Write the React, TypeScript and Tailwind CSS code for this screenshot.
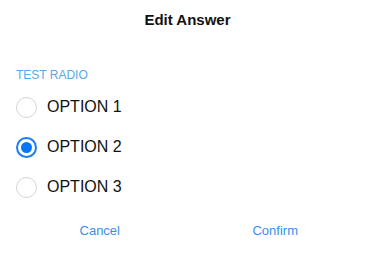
import React, { useState } from "react";

const options = ["OPTION 1", "OPTION 2", "OPTION 3"];

export default function App() {
  const [sel, setSel] = useState(1);
  return (
    <div
      className="w-[375px] h-[254px] bg-white flex flex-col"
      style={{ fontFamily: '"Liberation Sans", Arial, sans-serif' }}
    >
      <div className="h-[40px] flex items-center justify-center text-[15px] font-bold text-[#111]">
        Edit Answer
      </div>
      <div className="pt-[28px] px-[16px] text-[12px] leading-[14px] text-[#5aa9e6]">
        TEST RADIO
      </div>
      <div className="flex flex-col px-[16px] pt-[5px]">
        {options.map((o, i) => (
          <button
            key={o}
            onClick={() => setSel(i)}
            className="h-[40px] flex items-center gap-[10px] text-left"
          >
            {sel === i ? (
              <span className="w-[21px] h-[21px] rounded-full border-[2px] border-[#1a7cf5] flex items-center justify-center">
                <span className="w-[11px] h-[11px] rounded-full bg-[#0a76f6]" />
              </span>
            ) : (
              <span className="w-[21px] h-[21px] rounded-full border border-[#d4d4d4]" />
            )}
            <span className="text-[16px] text-[#111]">{o}</span>
          </button>
        ))}
      </div>
      <div className="flex px-[12px] pt-[9px]">
        <button className="flex-1 h-[30px] text-[13px] text-[#3b8eea]">Cancel</button>
        <button className="flex-1 h-[30px] text-[13px] text-[#3b8eea]">Confirm</button>
      </div>
    </div>
  );
}
